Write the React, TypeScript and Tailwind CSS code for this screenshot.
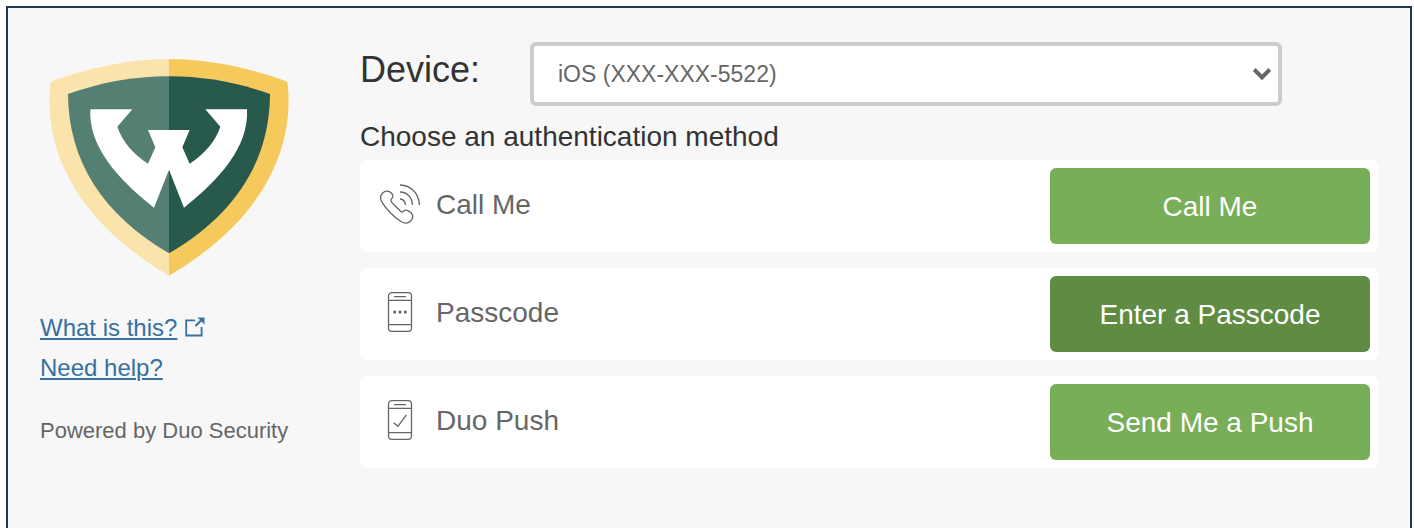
import { useState } from 'react'
import type { ReactNode } from 'react'

function ShieldLogo() {
  return (
    <svg viewBox="0 0 780 705" className="w-[260px] max-w-full" role="img" aria-label="University shield">
      <path d="M387 27C265 27 145 54 38 93Q32 95 31 102C12 275 85 500 387 677Z" fill="#fae4ab" />
      <path d="M387 27C509 27 629 54 736 93Q742 95 743 102C762 275 689 500 387 677Z" fill="#f6c95c" />
      <path d="M387 79C280 79 180 98 84 132C85 335 190 495 387 610Z" fill="#567f74" />
      <path d="M387 79C494 79 594 98 690 132C689 335 584 495 387 610Z" fill="#27594d" />
      <path
        d="M151 178H277L232 230C247 274 280 313 324 341L346 292L324 240H449L427 292L449 341C493 313 526 274 541 230L496 178H621C627 290 540 388 432 473L387 359L342 473C234 388 145 290 151 178Z"
        fill="#fff"
      />
    </svg>
  )
}

function ExternalIcon() {
  return (
    <svg viewBox="0 0 20 20" className="mb-0.5 h-5 w-5" fill="none" stroke="currentColor" strokeWidth="1.8" aria-hidden="true">
      <path d="M10 3.3H1.2V18.5H16.6V10" />
      <path d="M10.5 9L17 2.5" strokeWidth="2.2" />
      <path d="M12.5 0.5H19.5V7.5Z" fill="currentColor" stroke="none" />
    </svg>
  )
}

function CallIcon() {
  return (
    <svg viewBox="0 0 40 40" className="h-10 w-10" fill="none" stroke="currentColor" strokeWidth="1.3" strokeLinejoin="round" aria-hidden="true">
      <path d="M2.5 9.3C4 7.8 5.6 7.1 7.2 7.2C10.4 7.4 12.9 9.8 12.9 12.4C12.9 13.9 10.9 14.8 10.9 16.4C10.9 17.6 12 18.7 13 19.8L20.6 27.3C21.6 28.3 22.8 28.2 23.6 27.2C25.4 25.2 28.6 26.2 31.2 29C33.6 31.6 33.2 34.2 30.6 37C27.8 40 24.4 39.8 20.6 37.2C13.2 32.2 6.8 26 2.2 18.6C0 15 -0.2 12 2.5 9.3Z" />
      <path d="M20 1C31 1.2 39 9.5 39.4 21" />
      <path d="M20 8C27.2 8.2 32.2 13.6 32.4 21" />
      <path d="M20 15C23.2 15.2 25.2 17.6 25.4 21" />
    </svg>
  )
}

function PhoneIcon({ children }: { children: ReactNode }) {
  return (
    <svg viewBox="0 0 40 40" className="h-10 w-10" fill="none" stroke="currentColor" strokeWidth="1.3" aria-hidden="true">
      <rect x="8.5" y="0.6" width="23" height="38.8" rx="3.4" />
      <path d="M8.5 8.4H31.5M8.5 32.7H31.5M14 4.7H26" />
      {children}
    </svg>
  )
}

const METHODS = [
  { id: 'phone', label: 'Call Me', action: 'Call Me', icon: <CallIcon />, color: 'bg-[#78ae57]' },
  {
    id: 'passcode',
    label: 'Passcode',
    action: 'Enter a Passcode',
    icon: (
      <PhoneIcon>
        <path d="M13.2 20.2H16M18.6 20.2H21.4M24 20.2H26.8" strokeWidth="2.8" />
      </PhoneIcon>
    ),
    color: 'bg-[#5f8b43]',
  },
  {
    id: 'push',
    label: 'Duo Push',
    action: 'Send Me a Push',
    icon: (
      <PhoneIcon>
        <path d="M13.6 22.8L18 26.3L26.4 14.8" strokeWidth="1.4" />
      </PhoneIcon>
    ),
    color: 'bg-[#78ae57]',
  },
]

function DeviceSelect() {
  const [device, setDevice] = useState('ios')

  return (
    <div className="flex items-start">
      <label htmlFor="device" className="w-[170px] shrink-0 text-4xl leading-[56px]">
        Device:
      </label>
      <div className="relative mr-24 min-w-0 flex-1">
        <select
          id="device"
          value={device}
          onChange={e => setDevice(e.target.value)}
          className="block h-16 w-full appearance-none rounded-md border-4 border-[#ccc] bg-white pr-12 pl-6 text-[23px] text-[#666]"
        >
          <option value="ios">iOS (XXX-XXX-5522)</option>
        </select>
        <svg
          viewBox="0 0 20 14"
          className="pointer-events-none absolute top-[25px] right-[10px] h-3.5 w-5 text-[#666]"
          fill="none"
          stroke="currentColor"
          strokeWidth="4"
          aria-hidden="true"
        >
          <path d="M2.2 2.5L10 10.3L17.8 2.5" />
        </svg>
      </div>
    </div>
  )
}

export default function App() {
  return (
    <div className="flex min-h-screen bg-white pt-1.5 pr-0.5 pl-1.5 font-['Helvetica_Neue','Liberation_Sans',Arial,sans-serif] text-[#333]">
      <div className="flex w-full border-2 border-b-0 border-[#1d3a54] bg-[#f7f7f7] px-8 pb-8">
        <aside className="w-80 shrink-0 pt-[42px]">
          <ShieldLogo />
          <nav className="mt-[23px] flex flex-col items-start text-2xl leading-10 text-[#36719f]">
            <a href="#what" className="flex items-center gap-2">
              <span className="underline decoration-2 underline-offset-2">What is this?</span>
              <ExternalIcon />
            </a>
            <a href="#help" className="underline decoration-2 underline-offset-2">
              Need help?
            </a>
          </nav>
          <p className="mt-[27px] text-[22px] leading-8 text-[#666]">Powered by Duo Security</p>
        </aside>

        <main className="min-w-0 flex-1 pt-[34px]">
          <DeviceSelect />
          <h2 className="pt-[15px] pb-[7px] text-[28px] leading-8">Choose an authentication method</h2>
          <ul className="flex flex-col gap-4">
            {METHODS.map(m => (
              <li key={m.id} className="flex items-center justify-between rounded-md bg-white p-2">
                <div className="flex items-center gap-4 pb-1 pl-3 text-[28px] text-[#666]">
                  {m.icon}
                  <span id={`${m.id}-label`} className="pt-0.5 leading-8">
                    {m.label}
                  </span>
                </div>
                <button
                  type="button"
                  aria-describedby={`${m.id}-label`}
                  className={`h-[76px] w-80 cursor-pointer rounded-md pt-0.5 text-[28px] leading-8 text-white ${m.color}`}
                >
                  {m.action}
                </button>
              </li>
            ))}
          </ul>
        </main>
      </div>
    </div>
  )
}
